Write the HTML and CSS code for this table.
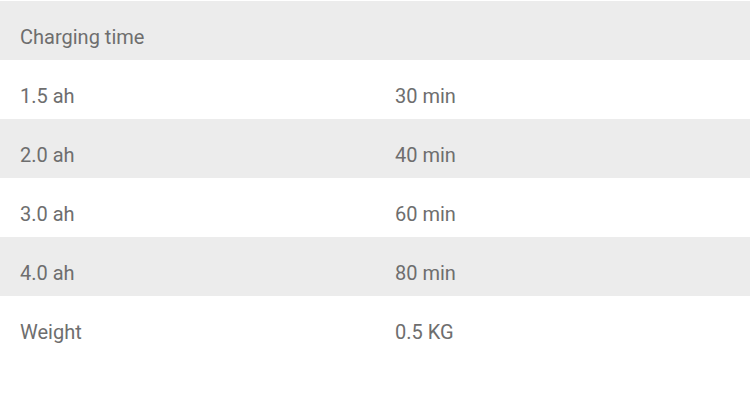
FILE: index.html
```html
<!DOCTYPE html>
<html>
<head>
<meta charset="utf-8">
<link rel="stylesheet" href="styles.css">
</head>
<body>
<table class="specs">
  <tr class="row alt"><td class="cell" colspan="2">Charging time</td></tr>
  <tr class="row"><td class="cell">1.5 ah</td><td class="cell">30 min</td></tr>
  <tr class="row alt"><td class="cell">2.0 ah</td><td class="cell">40 min</td></tr>
  <tr class="row"><td class="cell">3.0 ah</td><td class="cell">60 min</td></tr>
  <tr class="row alt"><td class="cell">4.0 ah</td><td class="cell">80 min</td></tr>
  <tr class="row"><td class="cell">Weight</td><td class="cell">0.5 KG</td></tr>
</table>
</body>
</html>
```
FILE: styles.css
```css
html, body {
  margin: 0;
  padding: 0;
  background: #fff;
}
body {
  padding-top: 1px;
  font-family: Roboto, "Liberation Sans", sans-serif;
  color: #6e6e6e;
}
.specs {
  width: 750px;
  border-collapse: collapse;
  table-layout: fixed;
}
.row {
  height: 59px;
}
.alt {
  background: #ececec;
}
.cell {
  box-sizing: border-box;
  padding: 13px 20px 0;
  font-size: 20px;
  font-weight: 400;
  line-height: 46px;
  height: 59px;
  width: 50%;
  vertical-align: top;
  text-align: left;
}
```
